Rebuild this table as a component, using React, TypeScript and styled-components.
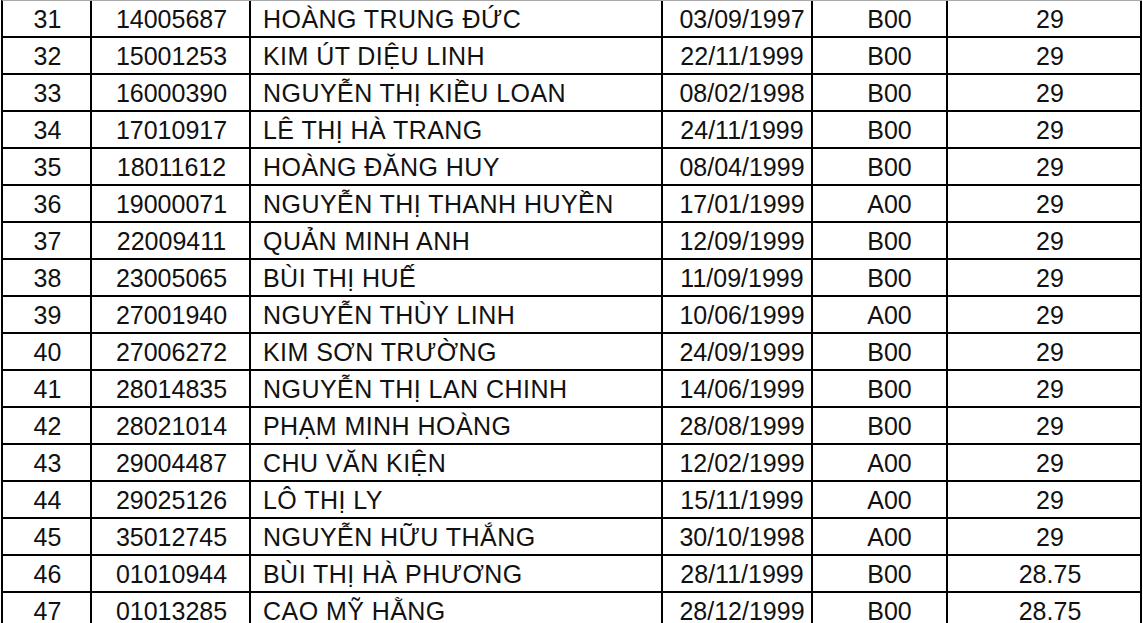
import * as React from 'react';
import styled, { createGlobalStyle } from 'styled-components';

const GlobalStyle = createGlobalStyle`
  html, body {
    margin: 0;
    padding: 0;
    background: #ffffff;
  }
  body {
    font-family: "Liberation Sans", Arial, sans-serif;
    color: #111111;
    overflow: hidden;
  }
`;

interface Student {
  no: number;
  id: string;
  name: string;
  dob: string;
  block: string;
  score: string;
}

const students: Student[] = [
  { no: 31, id: '14005687', name: 'HOÀNG TRUNG ĐỨC', dob: '03/09/1997', block: 'B00', score: '29' },
  { no: 32, id: '15001253', name: 'KIM ÚT DIỆU LINH', dob: '22/11/1999', block: 'B00', score: '29' },
  { no: 33, id: '16000390', name: 'NGUYỄN THỊ KIỀU LOAN', dob: '08/02/1998', block: 'B00', score: '29' },
  { no: 34, id: '17010917', name: 'LÊ THỊ HÀ TRANG', dob: '24/11/1999', block: 'B00', score: '29' },
  { no: 35, id: '18011612', name: 'HOÀNG ĐĂNG HUY', dob: '08/04/1999', block: 'B00', score: '29' },
  { no: 36, id: '19000071', name: 'NGUYỄN THỊ THANH HUYỀN', dob: '17/01/1999', block: 'A00', score: '29' },
  { no: 37, id: '22009411', name: 'QUẢN MINH ANH', dob: '12/09/1999', block: 'B00', score: '29' },
  { no: 38, id: '23005065', name: 'BÙI THỊ HUẾ', dob: '11/09/1999', block: 'B00', score: '29' },
  { no: 39, id: '27001940', name: 'NGUYỄN THÙY LINH', dob: '10/06/1999', block: 'A00', score: '29' },
  { no: 40, id: '27006272', name: 'KIM SƠN TRƯỜNG', dob: '24/09/1999', block: 'B00', score: '29' },
  { no: 41, id: '28014835', name: 'NGUYỄN THỊ LAN CHINH', dob: '14/06/1999', block: 'B00', score: '29' },
  { no: 42, id: '28021014', name: 'PHẠM MINH HOÀNG', dob: '28/08/1999', block: 'B00', score: '29' },
  { no: 43, id: '29004487', name: 'CHU VĂN KIỆN', dob: '12/02/1999', block: 'A00', score: '29' },
  { no: 44, id: '29025126', name: 'LÔ THỊ LY', dob: '15/11/1999', block: 'A00', score: '29' },
  { no: 45, id: '35012745', name: 'NGUYỄN HỮU THẮNG', dob: '30/10/1998', block: 'A00', score: '29' },
  { no: 46, id: '01010944', name: 'BÙI THỊ HÀ PHƯƠNG', dob: '28/11/1999', block: 'B00', score: '28.75' },
  { no: 47, id: '01013285', name: 'CAO MỸ HẰNG', dob: '28/12/1999', block: 'B00', score: '28.75' },
];

const Sheet = styled.div`
  border-top: 1px solid #a9a9a9;
  margin-left: 1px;
  width: 1141px;
  border-left: 2px solid #000;
  box-sizing: border-box;
`;

const Row = styled.div`
  display: grid;
  grid-template-columns: 89px 159px 412px 150px 135px 194px;
  height: 37px;
  border-bottom: 2px solid #000;
  box-sizing: border-box;
`;

const Cell = styled.div<{ $align?: 'left' | 'center'; $shift?: number; $spacing?: number }>`
  display: flex;
  align-items: center;
  justify-content: ${({ $align = 'center' }) => ($align === 'left' ? 'flex-start' : 'center')};
  padding-left: ${({ $shift = 0 }) => $shift}px;
  padding-top: 1px;
  border-right: 2px solid #000;
  box-sizing: border-box;
  font-size: 25px;
  line-height: 1;
  letter-spacing: ${({ $spacing = 0 }) => $spacing}px;
  white-space: nowrap;
  overflow: hidden;
`;

export default function App() {
  return (
    <>
      <GlobalStyle />
      <Sheet>
        {students.map((s) => (
          <Row key={s.no}>
            <Cell $shift={2}>{s.no}</Cell>
            <Cell $shift={2}>{s.id}</Cell>
            <Cell $align="left" $shift={12} $spacing={0.45}>{s.name}</Cell>
            <Cell $shift={10}>{s.dob}</Cell>
            <Cell $shift={20}>{s.block}</Cell>
            <Cell $shift={12}>{s.score}</Cell>
          </Row>
        ))}
      </Sheet>
    </>
  );
}
